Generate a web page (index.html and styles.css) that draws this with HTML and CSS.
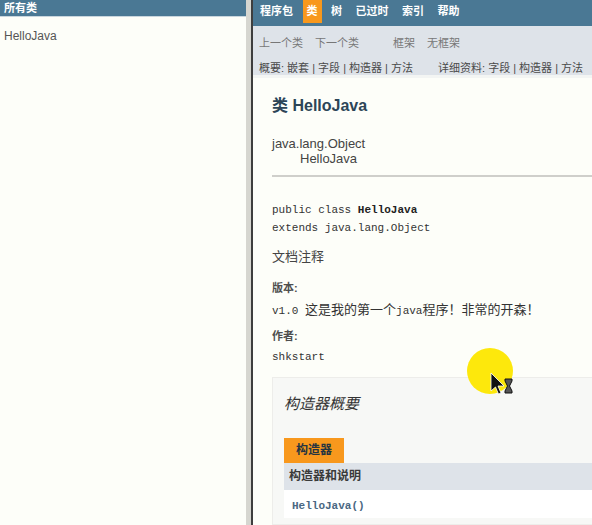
FILE: index.html
```html
<!DOCTYPE html>
<html lang="zh">
<head>
<meta charset="utf-8">
<title>HelloJava</title>
<link rel="stylesheet" href="styles.css">
</head>
<body>
<div class="frames">
  <aside class="left-frame">
    <h1 class="bar">所有类</h1>
    <ul class="class-list">
      <li>HelloJava</li>
    </ul>
  </aside>
  <div class="divider"></div>
  <main class="right-frame">
    <nav class="topnav">
      <span class="nav-item">程序包</span>
      <span class="nav-item active">类</span>
      <span class="nav-item">树</span>
      <span class="nav-item">已过时</span>
      <span class="nav-item">索引</span>
      <span class="nav-item">帮助</span>
    </nav>
    <div class="subnav">
      <div class="subnav-row muted">
        <span>上一个类</span><span>下一个类</span><span class="frames-links">框架</span><span>无框架</span>
      </div>
      <div class="subnav-row">
        <span>概要:&nbsp;嵌套&nbsp;|&nbsp;字段&nbsp;|&nbsp;构造器&nbsp;|&nbsp;方法</span>
        <span class="detail">详细资料:&nbsp;字段&nbsp;|&nbsp;构造器&nbsp;|&nbsp;方法</span>
      </div>
    </div>
    <div class="content">
      <h2 class="title">类 HelloJava</h2>
      <div class="inherit">
        <div>java.lang.Object</div>
        <div class="indent">HelloJava</div>
      </div>
      <hr class="rule">
      <pre class="sig">public class <b>HelloJava</b>
extends java.lang.Object</pre>
      <p class="doc">文档注释</p>
      <dl class="tags">
        <dt>版本:</dt>
        <dd>v1.0 <span class="cjk">这是我的第一个</span>java<span class="cjk">程序！非常的开森！</span></dd>
        <dt>作者:</dt>
        <dd>shkstart</dd>
      </dl>
      <section class="summary">
        <h3 class="summary-title">构造器概要</h3>
        <div class="caption"><span>构造器</span></div>
        <div class="th">构造器和说明</div>
        <div class="td"><code>HelloJava()</code></div>
      </section>
    </div>
  </main>
</div>
<div class="cursor">
  <svg width="50" height="52" viewBox="0 0 50 52">
    <circle cx="23" cy="23" r="23" fill="#fde80c"/>
    <path d="M24 25 L24 43 L28.5 39 L31.5 46 L34 45 L31 38 L37 38 Z" fill="#111" stroke="#fff" stroke-width="0.8"/>
    <path d="M38 31 L45 31 L45 33 L42.5 38 L45 43 L45 45 L38 45 L38 43 L40.5 38 L38 33 Z" fill="#555" stroke="#111" stroke-width="1"/>
  </svg>
</div>
</body>
</html>
```

FILE: styles.css
```css
html, body {
  margin: 0;
  padding: 0;
  height: 100%;
  overflow: hidden;
  background: #fdfef9;
  font-family: "Liberation Sans", Arial, "Noto Sans CJK SC", sans-serif;
}

.frames {
  display: flex;
  height: 525px;
}

.left-frame {
  width: 246px;
  flex: 0 0 246px;
  background: #fdfef9;
}

.bar {
  margin: 0;
  height: 16px;
  line-height: 16px;
  padding-left: 4px;
  background: #4a7894;
  color: #fff;
  font-size: 11px;
  font-weight: bold;
  border-bottom: 1px solid #c9d6de;
}

.class-list {
  list-style: none;
  margin: 0;
  padding: 12px 0 0 4px;
  font-size: 12px;
  color: #555;
}

.divider {
  flex: 0 0 5px;
  background: #d6d6d0;
  border-right: 2px solid #3e3e3e;
}

.right-frame {
  flex: 1;
  min-width: 0;
  background: #fdfef9;
}

.topnav {
  display: flex;
  align-items: flex-start;
  height: 26px;
  background: #4a7894;
  padding-left: 3px;
  gap: 5.5px;
}

.nav-item {
  color: #fff;
  font-size: 11px;
  font-weight: bold;
  padding: 6px 4px;
  line-height: 11px;
}

.nav-item.active {
  background: #f8981d;
  color: #fff;
}

.subnav {
  background: #dee3e9;
  height: 52px;
  padding: 10px 0 0 6px;
  box-sizing: border-box;
  border-bottom: 3px solid #f3f5f3;
}

.subnav-row {
  display: flex;
  font-size: 11px;
  color: #4a4a4a;
  white-space: nowrap;
  line-height: 14px;
}

.subnav-row.muted {
  color: #777;
  gap: 12px;
  margin-bottom: 11px;
}

.frames-links {
  margin-left: 22px;
}

.detail {
  margin-left: 25px;
}

.content {
  padding-left: 19px;
}

.title {
  margin: 18px 0 0;
  font-size: 16px;
  line-height: 20px;
  color: #2c4557;
  font-weight: bold;
}

.inherit {
  margin-top: 20px;
  font-size: 13px;
  line-height: 15px;
  color: #444;
}

.indent {
  padding-left: 28px;
}

.rule {
  margin: 9px 0 0;
  border: 0;
  height: 2px;
  background: #cfcfcb;
}

.sig {
  margin: 24px 0 0;
  font-family: "Liberation Mono", "Noto Sans CJK SC", monospace;
  font-size: 11px;
  line-height: 18px;
  color: #333;
}

.sig b {
  color: #222;
}

.doc {
  margin: 12px 0 0;
  font-size: 13px;
  line-height: 16px;
  color: #444;
}

.tags {
  margin: 16px 0 0;
  font-size: 11px;
}

.tags dt {
  font-weight: bold;
  color: #4e4e4e;
  line-height: 14px;
  margin: 0;
}

.tags dd {
  margin: 6px 0 10px;
  font-family: "Liberation Mono", "Noto Sans CJK SC", monospace;
  color: #333;
  line-height: 16px;
  font-size: 11px;
}

.tags dd .cjk {
  font-family: "Noto Sans CJK SC", sans-serif;
  font-size: 13px;
}

.summary {
  margin-top: 12px;
  background: #f7f8f6;
  border: 1px solid #ededea;
  border-right: 0;
  padding: 16px 0 6px 11px;
}

.summary-title {
  margin: 0 0 24px;
  font-size: 15px;
  font-style: italic;
  font-weight: normal;
  color: #333;
  line-height: 20px;
}

.caption {
  display: flex;
}

.caption span {
  background: #f8981d;
  color: #253441;
  font-weight: bold;
  font-size: 12px;
  height: 25px;
  line-height: 25px;
  padding: 0 12px;
}

.th {
  background: #dee3e9;
  height: 27px;
  line-height: 27px;
  font-size: 12px;
  font-weight: bold;
  color: #3a3a3a;
  padding-left: 5px;
}

.td {
  background: #fff;
  height: 28px;
  line-height: 28px;
  padding-left: 8px;
}

.td code {
  font-family: "Liberation Mono", monospace;
  font-size: 11px;
  font-weight: bold;
  color: #4a6782;
}

.cursor {
  position: absolute;
  left: 467px;
  top: 348px;
  width: 50px;
  height: 52px;
  pointer-events: none;
}
```
